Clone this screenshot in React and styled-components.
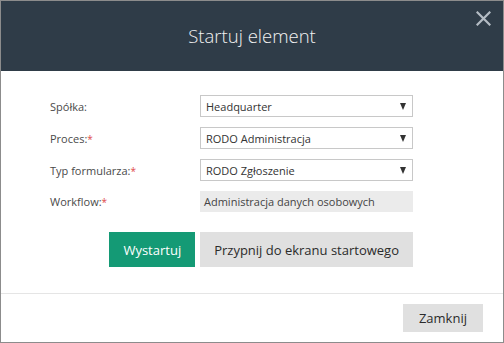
import styled, { createGlobalStyle } from "styled-components";

const GlobalStyle = createGlobalStyle`
  html, body {
    margin: 0;
    padding: 0;
    background: #ffffff;
  }
  * {
    box-sizing: border-box;
  }
`;

const Modal = styled.div`
  width: 504px;
  height: 343px;
  border: 1px solid #8c8c8c;
  background: #ffffff;
  display: flex;
  flex-direction: column;
  font-family: "Open Sans", "Noto Sans", sans-serif;
`;

const Header = styled.div`
  position: relative;
  height: 70px;
  background: #2f3c48;
  display: flex;
  align-items: center;
  justify-content: center;
`;

const Title = styled.h1`
  margin: 0 0 1px;
  font-size: 18.5px;
  font-weight: 300;
  color: #f2f2f2;
`;

const Close = styled.button`
  position: absolute;
  top: 7px;
  right: 10px;
  border: 0;
  padding: 0;
  background: none;
  width: 20px;
  height: 20px;
  display: flex;
  align-items: center;
  justify-content: center;
`;

const Body = styled.div`
  flex: 1;
  padding: 24px 90px 0 49px;
  display: flex;
  flex-direction: column;
`;

const Form = styled.div`
  display: grid;
  grid-template-columns: 150px 213px;
  row-gap: 10px;
  align-items: center;
`;

const Label = styled.label`
  font-size: 11px;
  color: #4a4a4a;
`;

const Star = styled.span`
  color: #e04a4a;
  font-size: 10px;
`;

const Select = styled.div`
  height: 22px;
  border: 1px solid #c8c8c8;
  background: #ffffff;
  display: flex;
  align-items: center;
  justify-content: space-between;
  padding: 0 6px 0 5px;
  font-size: 11px;
  color: #333333;
`;

const Arrow = styled.span`
  width: 0;
  height: 0;
  border-left: 3.5px solid transparent;
  border-right: 3.5px solid transparent;
  border-top: 7px solid #333333;
`;

const ReadOnly = styled.div`
  height: 21px;
  background: #ebebeb;
  display: flex;
  align-items: center;
  padding: 0 4px;
  font-size: 11px;
  color: #444444;
`;

const Actions = styled.div`
  display: flex;
  justify-content: flex-end;
  gap: 5px;
  margin-top: 20px;
`;

const Button = styled.button`
  height: ${(p) => (p.$small ? "28px" : "35px")};
  padding: 0 ${(p) => (p.$small ? "16px" : "14px")};
  border: 0;
  background: ${(p) => (p.$primary ? "#149a75" : "#e0e0e0")};
  color: ${(p) => (p.$primary ? "#ffffff" : "#2b2b2b")};
  font-family: "Open Sans", "Noto Sans", sans-serif;
  font-size: 13px;
  cursor: pointer;
`;

const Footer = styled.div`
  border-top: 1px solid #e5e5e5;
  height: 49px;
  display: flex;
  align-items: center;
  justify-content: flex-end;
  padding: 0 20px 0 0;
`;

const fields = [
  { label: "Spółka:", value: "Headquarter", required: false },
  { label: "Proces:", value: "RODO Administracja", required: true },
  { label: "Typ formularza:", value: "RODO Zgłoszenie", required: true },
];

export default function App() {
  return (
    <>
      <GlobalStyle />
      <Modal>
        <Header>
          <Title>Startuj element</Title>
          <Close aria-label="Zamknij">
            <svg width="15" height="15" viewBox="0 0 15 15">
              <path
                d="M1.5 1.5 L13.5 13.5 M13.5 1.5 L1.5 13.5"
                stroke="#b4bcc4"
                strokeWidth="2.2"
                strokeLinecap="square"
              />
            </svg>
          </Close>
        </Header>
        <Body>
          <Form>
            {fields.map((f) => (
              <>
                <Label key={f.label + "l"}>
                  {f.label}
                  {f.required && <Star>*</Star>}
                </Label>
                <Select key={f.label + "s"}>
                  {f.value}
                  <Arrow />
                </Select>
              </>
            ))}
            <Label>
              Workflow:<Star>*</Star>
            </Label>
            <ReadOnly>Administracja danych osobowych</ReadOnly>
          </Form>
          <Actions>
            <Button $primary>Wystartuj</Button>
            <Button>Przypnij do ekranu startowego</Button>
          </Actions>
        </Body>
        <Footer>
          <Button $small>Zamknij</Button>
        </Footer>
      </Modal>
    </>
  );
}
